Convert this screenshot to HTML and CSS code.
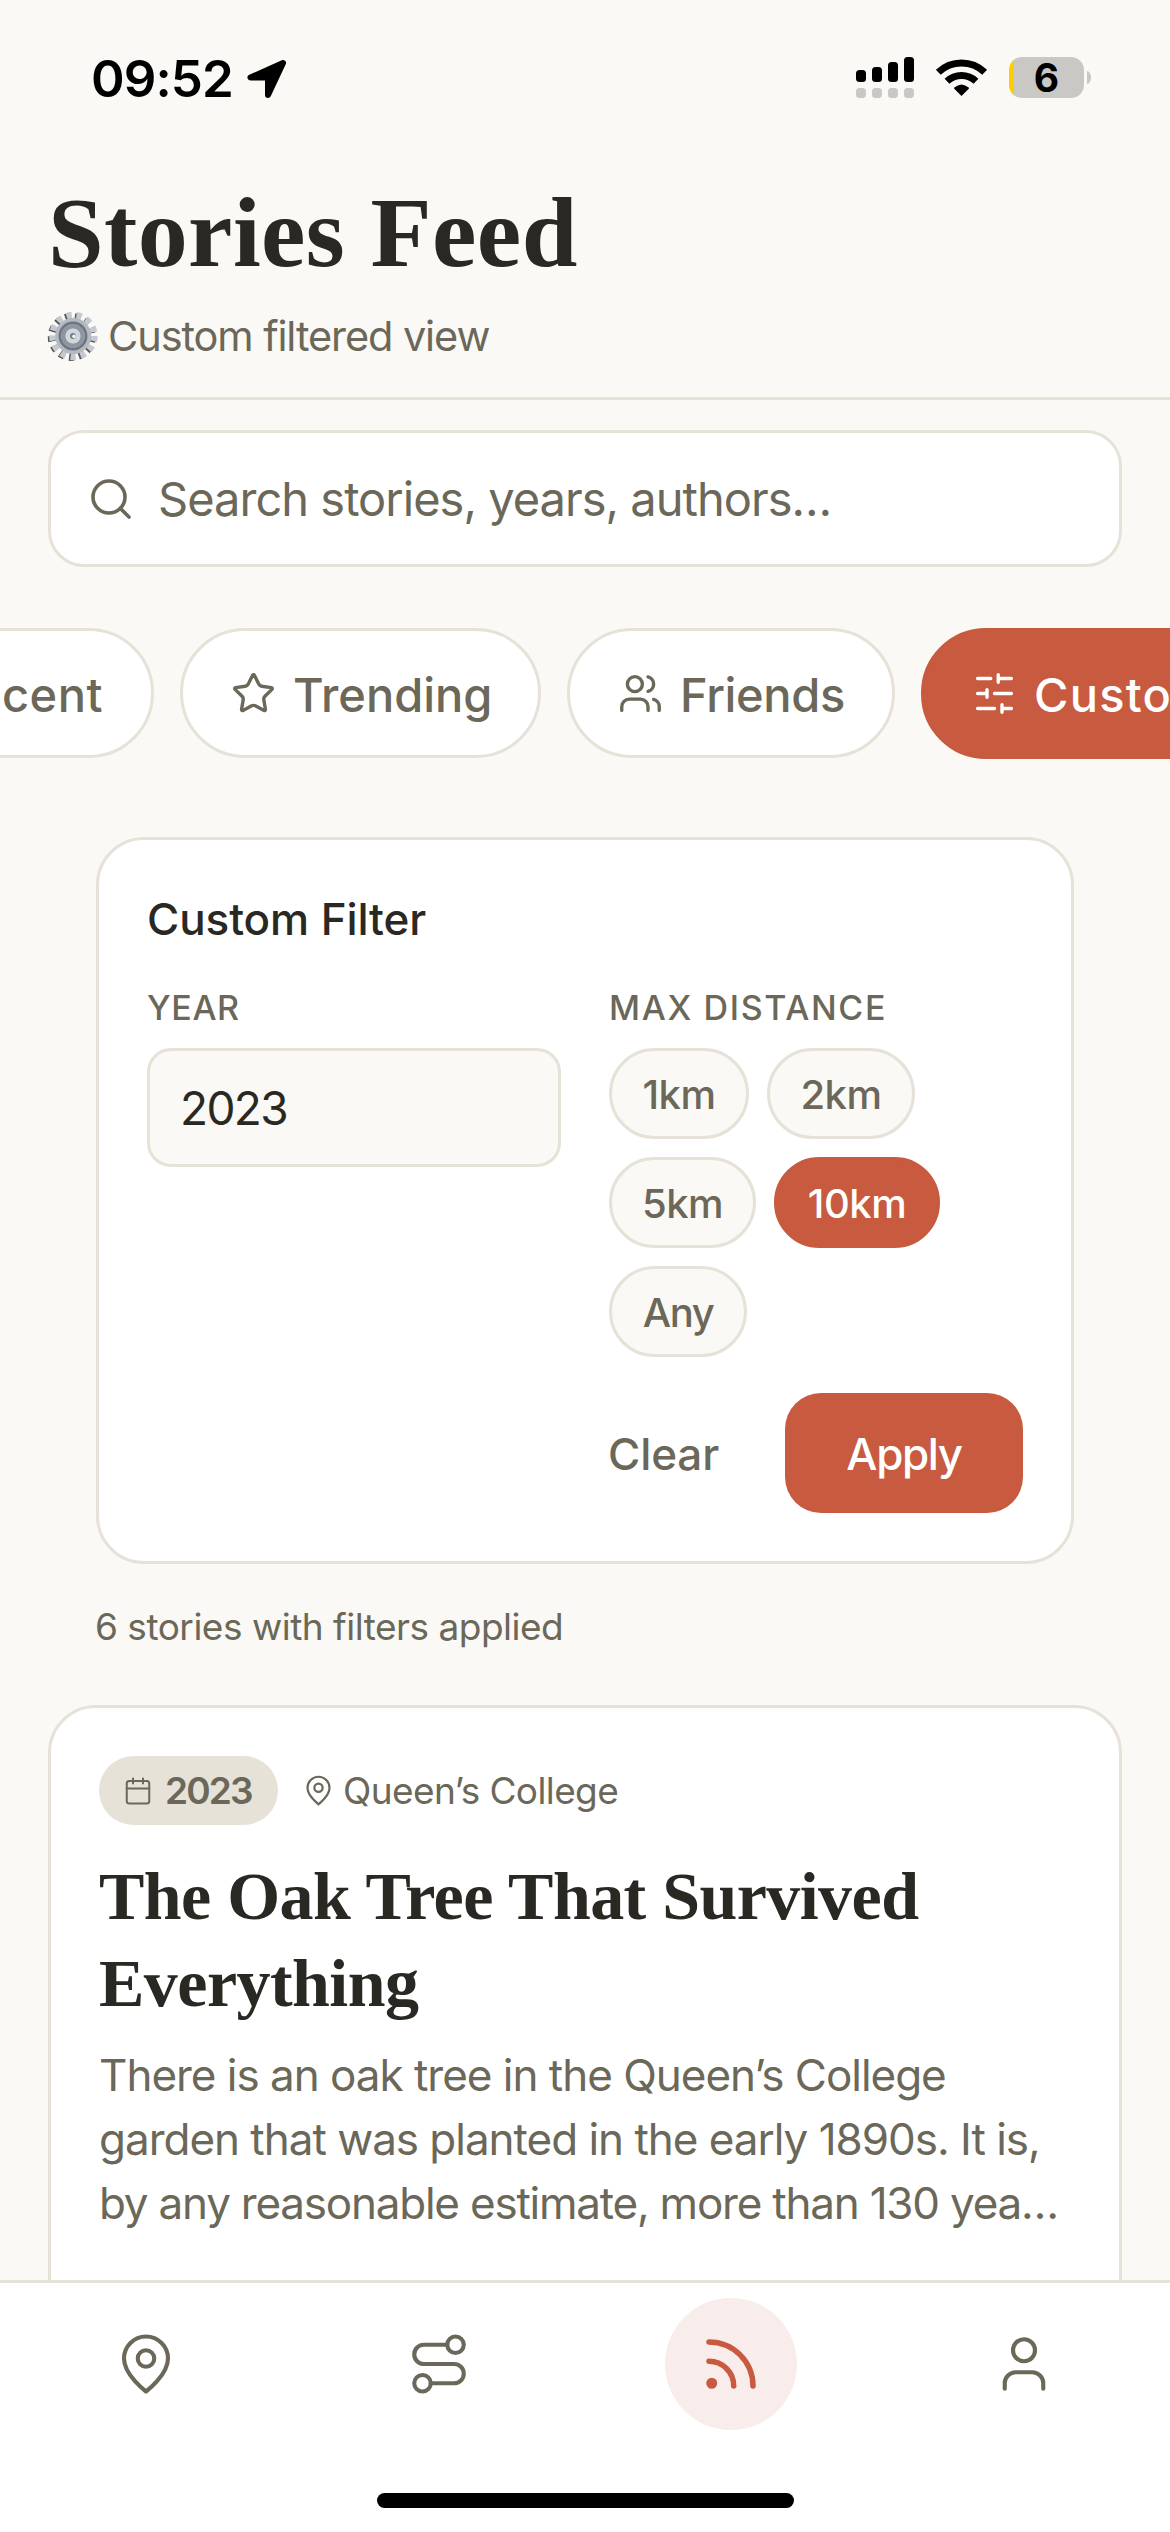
FILE: index.html
```html
<!DOCTYPE html>
<html lang="en">
<head>
<meta charset="utf-8">
<title>Stories Feed</title>
<link rel="stylesheet" href="styles.css">
</head>
<body>
<div class="screen">
  <div class="status">
    <div class="status-left">
      <span class="time">09:52</span>
      <svg class="arrow" viewBox="0 0 40 40"><path d="M36 4 3.5 18.5H21V36Z" fill="#000" stroke="#000" stroke-width="6" stroke-linejoin="round"/></svg>
    </div>
    <div class="status-right">
      <svg class="signal" viewBox="0 0 58 41">
        <g fill="#000"><rect y="13" width="10" height="12" rx="3.5"/><rect x="16" y="10" width="10" height="15" rx="3.5"/><rect x="32" y="5" width="10" height="20" rx="3.5"/><rect x="48" width="10" height="25" rx="3.5"/></g>
        <g fill="#c9c8c4"><rect y="31" width="10" height="10" rx="3.5"/><rect x="16" y="31" width="10" height="10" rx="3.5"/><rect x="32" y="31" width="10" height="10" rx="3.5"/><rect x="48" y="31" width="10" height="10" rx="3.5"/></g>
      </svg>
      <svg class="wifi" viewBox="0 0 51 37"><g fill="none" stroke="#000" stroke-width="7"><path d="M2.3 13.3A33.5 33.5 0 0 1 48.7 13.3"/><path d="M11 22.3A21 21 0 0 1 40 22.3"/></g><path d="M25.5 37 18 29.5C18 26 33 26 33 29.5Z"/><path d="M18 29Q25.5 22 33 29Z"/></svg>
      <div class="battery"><span class="battery-body">6</span><span class="battery-cap"></span></div>
    </div>
  </div>

  <header class="header">
    <h1 class="title">Stories Feed</h1>
    <div class="subtitle">
      <svg class="gear" viewBox="0 0 50 50">
        <g fill="none">
          <circle cx="23.8" cy="26" r="20" stroke="#5c5650" stroke-width="8" stroke-dasharray="5 4.666"/>
          <circle cx="25.4" cy="25" r="20" stroke="#c3cad4" stroke-width="8.5" stroke-dasharray="5 4.666"/>
          <circle cx="25.2" cy="25" r="15.5" stroke="#b3bac3" stroke-width="5"/>
          <circle cx="25" cy="25" r="13" stroke="#6f767f" stroke-width="2.8"/>
          <circle cx="25" cy="25" r="9.6" stroke="#8f969f" stroke-width="4.6"/>
          <circle cx="25" cy="25" r="5.2" fill="#817872" stroke="#cfd7e2" stroke-width="4.6"/>
        </g>
        <circle cx="26" cy="25.4" r="1.8" fill="#f5f1ea"/>
      </svg>
      <span>Custom filtered view</span>
    </div>
  </header>

  <main class="content">
    <div class="search">
      <svg class="icon search-icon" viewBox="0 0 24 24"><circle cx="11" cy="11" r="8"/><path d="m21 21-4.3-4.3"/></svg>
      <span class="search-text">Search stories, years, authors…</span>
    </div>

    <nav class="tabs">
      <div class="tab tab-recent"><span>Recent</span></div>
      <div class="tab tab-trending">
        <svg class="icon tab-icon" viewBox="0 0 24 24"><path d="M11.525 2.295a.53.53 0 0 1 .95 0l2.31 4.679a2.123 2.123 0 0 0 1.595 1.16l5.166.756a.53.53 0 0 1 .294.904l-3.736 3.638a2.123 2.123 0 0 0-.611 1.878l.882 5.14a.53.53 0 0 1-.771.56l-4.618-2.428a2.122 2.122 0 0 0-1.973 0L6.396 21.01a.53.53 0 0 1-.77-.56l.881-5.139a2.122 2.122 0 0 0-.611-1.879L2.16 9.795a.53.53 0 0 1 .294-.906l5.165-.755a2.122 2.122 0 0 0 1.597-1.16z"/></svg>
        <span>Trending</span>
      </div>
      <div class="tab tab-friends">
        <svg class="icon tab-icon" viewBox="0 0 24 24"><path d="M16 21v-2a4 4 0 0 0-4-4H6a4 4 0 0 0-4 4v2"/><circle cx="9" cy="7" r="4"/><path d="M22 21v-2a4 4 0 0 0-3-3.87M16 3.13a4 4 0 0 1 0 7.75"/></svg>
        <span>Friends</span>
      </div>
      <div class="tab tab-custom">
        <svg class="icon tab-icon" viewBox="0 0 24 24"><path d="M21 4h-7M10 4H3M21 12h-9M8 12H3M21 20h-5M12 20H3M14 2v4M8 10v4M16 18v4"/></svg>
        <span>Custom</span>
      </div>
    </nav>

    <section class="filter">
      <h2 class="filter-title">Custom Filter</h2>
      <div class="filter-grid">
        <div>
          <div class="label label-year">YEAR</div>
          <div class="input">2023</div>
        </div>
        <div>
          <div class="label">MAX DISTANCE</div>
          <div class="options">
            <span class="option w-1">1km</span><span class="option w-2">2km</span>
            <span class="option w-5">5km</span><span class="option w-10 selected">10km</span>
            <span class="option w-any">Any</span>
          </div>
        </div>
      </div>
      <div class="actions"><span class="clear">Clear</span><span class="apply">Apply</span></div>
    </section>

    <p class="results">6 stories with filters applied</p>

    <article class="story">
      <div class="meta">
        <span class="badge">
          <svg class="icon badge-icon" viewBox="0 0 24 24"><path d="M8 2v4M16 2v4M3 10h18"/><rect x="3" y="4" width="18" height="18" rx="2"/></svg>
          <span>2023</span>
        </span>
        <span class="place">
          <svg class="icon place-icon" viewBox="0 0 24 24"><path d="M20 10c0 6-8 12-8 12s-8-6-8-12a8 8 0 0 1 16 0Z"/><circle cx="12" cy="10" r="3"/></svg>
          <span>Queen’s College</span>
        </span>
      </div>
      <h3 class="story-title">The Oak Tree That Survived<br>Everything</h3>
      <p class="story-text">There is an oak tree in the Queen’s College<br>garden that was planted in the early 1890s. It is,<br><span class="last">by any reasonable estimate, more than 130 yea…</span></p>
    </article>
  </main>

  <footer class="bottom">
    <div class="nav">
      <span class="nav-item"><svg class="icon nav-icon" viewBox="0 0 24 24"><path d="M20 10c0 6-8 12-8 12s-8-6-8-12a8 8 0 0 1 16 0Z"/><circle cx="12" cy="10" r="3"/></svg></span>
      <span class="nav-item"><svg class="icon nav-icon" viewBox="0 0 24 24"><circle cx="6" cy="19" r="3"/><path d="M9 19h8.5a3.5 3.5 0 0 0 0-7h-11a3.5 3.5 0 0 1 0-7H15"/><circle cx="18" cy="5" r="3"/></svg></span>
      <span class="nav-item active"><svg class="icon nav-icon" viewBox="0 0 24 24"><path d="M4 11a9 9 0 0 1 9 9M4 4a16 16 0 0 1 16 16"/><circle cx="5" cy="19" r="1"/></svg></span>
      <span class="nav-item"><svg class="icon nav-icon" viewBox="0 0 24 24"><path d="M19 21v-2a4 4 0 0 0-4-4H9a4 4 0 0 0-4 4v2"/><circle cx="12" cy="7" r="4"/></svg></span>
    </div>
    <div class="home"></div>
  </footer>
</div>
</body>
</html>
```
FILE: styles.css
```css
* { box-sizing: border-box; }
body { margin: 0; background: #faf9f5; font-family: Inter, sans-serif; color: #2a2823; }
h1, h2, h3, p { margin: 0; }
svg { display: block; flex: none; overflow: visible; }

.screen { width: 1170px; height: 2532px; display: flex; flex-direction: column; overflow: hidden; }
.icon { fill: none; stroke: currentColor; stroke-width: 1.8; stroke-linecap: round; stroke-linejoin: round; }

.status { height: 141px; flex: none; display: flex; justify-content: space-between; padding: 0 79px 0 91px; color: #000; }
.status-left { display: flex; align-items: center; height: 157px; gap: 14px; }
.time { font-size: 51px; font-weight: 600; letter-spacing: -.9px; line-height: 62px; }
.arrow { width: 40px; height: 40px; }
.status-right { display: flex; align-items: center; height: 155px; }
.signal { width: 58px; height: 41px; margin-right: 22px; }
.wifi { width: 51px; height: 37px; margin-right: 22px; }
.battery { display: flex; align-items: center; gap: 3px; }
.battery-body { width: 75px; height: 41px; border-radius: 13px; background: linear-gradient(90deg, #fc0 5px, #c9c8c4 5px); font-size: 39px; font-weight: 700; line-height: 42px; text-align: center; }
.battery-cap { width: 4px; height: 13px; border-radius: 0 4px 4px 0 / 0 6.5px 6.5px 0; background: #c9c8c4; }

.header { flex: none; height: 259px; padding: 32px 48px 0; border-bottom: 3px solid #e6e2d8; }
.title { font: 700 100px/120px "Liberation Serif", serif; letter-spacing: .4px; }
.subtitle { display: flex; align-items: center; gap: 10px; height: 60px; margin-top: 13px; font-size: 41.5px; letter-spacing: -1.1px; color: #6b6759; }
.gear { width: 50px; height: 50px; }

.content { flex: 1; min-height: 0; overflow: hidden; color: #6b6759; }
.search { display: flex; align-items: center; gap: 23px; height: 137px; margin: 30px 48px 0; padding-left: 36px; background: #fff; border: 3px solid #e6e2d8; border-radius: 36px; }
.search-icon { width: 48px; height: 48px; }
.search-text { font-size: 47px; letter-spacing: -.98px; line-height: 60px; }

.tabs { display: flex; gap: 26px; height: 131px; margin: 61px 0 0 -146px; font-size: 47px; font-weight: 500; }
.tab { flex: none; display: flex; align-items: center; gap: 17px; height: 130px; padding: 0 48px; background: #fff; border: 3px solid #e6e2d8; border-radius: 65px; white-space: nowrap; }
.tab span { line-height: 60px; padding-top: 3px; }
.tab-icon { width: 45px; height: 45px; }
.tab-recent { width: 300px; justify-content: flex-end; letter-spacing: .5px; }
.tab-trending { width: 361px; }
.tab-friends { width: 328px; letter-spacing: -.34px; }
.tab-custom { width: 355px; height: 131px; background: #c75a3f; border-color: #c75a3f; color: #fff; letter-spacing: 1.2px; }

.filter { height: 727px; margin: 78px 96px 0; padding: 49px 48px 0; background: #fff; border: 3px solid #e6e2d8; border-radius: 48px; }
.filter-title { font-size: 44px; font-weight: 500; letter-spacing: -.1px; line-height: 60px; color: #2a2823; }
.filter-grid { display: grid; grid-template-columns: 1fr 1fr; gap: 48px; margin-top: 37px; }
.label { font-size: 34px; font-weight: 500; line-height: 44px; letter-spacing: 1.65px; }
.label-year { letter-spacing: .6px; }
.input { height: 119px; margin-top: 18px; padding-left: 30px; border: 3px solid #e6e2d8; border-radius: 24px; background: #faf9f5; font-size: 46px; line-height: 114px; letter-spacing: -1.6px; color: #2a2823; }
.options { display: flex; flex-wrap: wrap; gap: 18px; margin-top: 18px; }
.option { height: 91px; border: 3px solid #e6e2d8; border-radius: 46px; background: #faf9f5; font-size: 40px; font-weight: 500; line-height: 87px; letter-spacing: -.5px; text-align: center; }
.selected { background: #c75a3f; border-color: #c75a3f; color: #fff; }
.w-1 { width: 140px; }
.w-2 { width: 148px; }
.w-5 { width: 147px; }
.w-10 { width: 166px; }
.w-any { width: 138px; letter-spacing: -1.5px; }
.actions { display: flex; justify-content: flex-end; align-items: center; gap: 66px; margin-top: 36px; font-size: 44px; font-weight: 500; }
.clear { letter-spacing: -.15px; line-height: 60px; padding-top: 2px; }
.apply { width: 238px; height: 120px; border-radius: 36px; background: #c75a3f; color: #fff; line-height: 122px; text-align: center; letter-spacing: -1.4px; }

.results { margin: 37px 0 0 95px; font-size: 37px; line-height: 51px; height: 50px; letter-spacing: -.49px; }

.story { height: 800px; margin: 54px 48px 0; padding: 48px; background: #fff; border: 3px solid #e6e2d8; border-radius: 48px; }
.meta { display: flex; align-items: center; gap: 24px; font-size: 37px; line-height: 50px; }
.badge { display: flex; align-items: center; gap: 12px; width: 179px; height: 69px; padding-left: 24px; border-radius: 35px; background: #e6e2d8; font-weight: 600; letter-spacing: -1.8px; }
.badge-icon { width: 30px; height: 30px; stroke-width: 1.6; }
.place { display: flex; align-items: center; gap: 8px; letter-spacing: -.6px; }
.place-icon { width: 33px; height: 33px; stroke-width: 1.6; }
.story-title { margin-top: 28px; font: 700 68px/87px "Liberation Serif", serif; letter-spacing: -.55px; color: #2a2823; white-space: nowrap; }
.story-text { margin-top: 16px; font-size: 44px; line-height: 64px; letter-spacing: -1.02px; white-space: nowrap; }
.last { letter-spacing: -1.22px; }

.bottom { flex: none; height: 252px; padding-top: 15px; background: #fff; border-top: 3px solid #e6e2d8; color: #6b6759; }
.nav { display: grid; grid-template-columns: repeat(4, 1fr); justify-items: center; }
.nav-item { display: flex; align-items: center; justify-content: center; width: 132px; height: 132px; border-radius: 50%; }
.nav-icon { width: 66px; height: 66px; stroke-width: 1.5; }
.active { background: #f9edeb; color: #c75a3f; }
.active .nav-icon { stroke-width: 2; }
.home { width: 417px; height: 15px; margin: 63px auto 0; border-radius: 8px; background: #000; }
```
